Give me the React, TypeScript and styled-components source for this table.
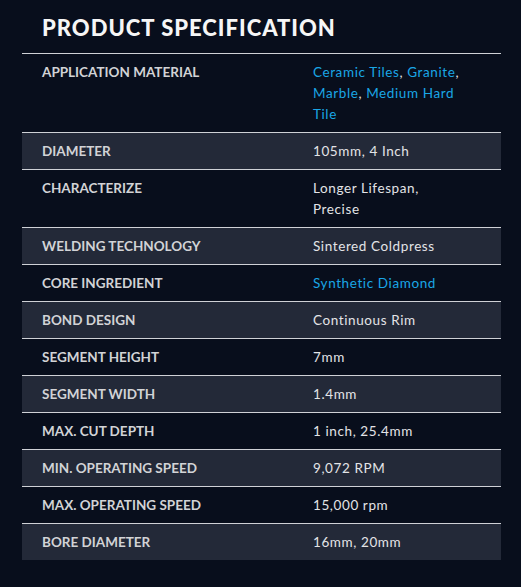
import React from "react";
import styled, { createGlobalStyle } from "styled-components";

const Global = createGlobalStyle`
  html, body { margin: 0; padding: 0; background: #080e1c; }
  body { font-family: "Lato", "DejaVu Sans", sans-serif; }
`;

const Page = styled.div`
  padding: 14px 20px 26px 22px;
  width: 479px;
`;

const Title = styled.h2`
  margin: 0 0 12px 20px;
  font-size: 22px;
  line-height: 27px;
  font-weight: 900;
  letter-spacing: 1px;
  color: #f6f6f6;
`;

const Table = styled.div`
  display: flex;
  flex-direction: column;
`;

const Row = styled.div<{ $shaded: boolean }>`
  display: grid;
  grid-template-columns: 291px 1fr;
  border-top: 1px solid #cfd1d6;
  background: ${(p) => (p.$shaded ? "#232938" : "transparent")};
  padding: 8px 0 7px;
`;

const Label = styled.div`
  padding-left: 20px;
  font-size: 13.5px;
  line-height: 21px;
  font-weight: 700;
  color: #d2d3d6;
  text-transform: uppercase;
`;

const Value = styled.div`
  padding-right: 38px;
  font-size: 13.5px;
  line-height: 21px;
  letter-spacing: 0.6px;
  color: #e3e4e7;
`;

const Link = styled.span`
  color: #1aa6e6;
`;

type Part = string | { link: string };

const rows: { label: string; value: Part[] }[] = [
  {
    label: "Application Material",
    value: [
      { link: "Ceramic Tiles" },
      ", ",
      { link: "Granite" },
      ", ",
      { link: "Marble" },
      ", ",
      { link: "Medium Hard Tile" },
    ],
  },
  { label: "Diameter", value: ["105mm, 4 Inch"] },
  { label: "Characterize", value: ["Longer Lifespan, Precise"] },
  { label: "Welding Technology", value: ["Sintered Coldpress"] },
  { label: "Core Ingredient", value: [{ link: "Synthetic Diamond" }] },
  { label: "Bond Design", value: ["Continuous Rim"] },
  { label: "Segment Height", value: ["7mm"] },
  { label: "Segment Width", value: ["1.4mm"] },
  { label: "Max. Cut Depth", value: ["1 inch, 25.4mm"] },
  { label: "Min. Operating Speed", value: ["9,072 RPM"] },
  { label: "Max. Operating Speed", value: ["15,000 rpm"] },
  { label: "Bore Diameter", value: ["16mm, 20mm"] },
];

export default function App() {
  return (
    <>
      <Global />
      <Page>
        <Title>PRODUCT SPECIFICATION</Title>
        <Table>
          {rows.map((r, i) => (
            <Row key={r.label} $shaded={i % 2 === 1}>
              <Label>{r.label}</Label>
              <Value>
                {r.value.map((p, j) =>
                  typeof p === "string" ? (
                    <React.Fragment key={j}>{p}</React.Fragment>
                  ) : (
                    <Link key={j}>{p.link}</Link>
                  )
                )}
              </Value>
            </Row>
          ))}
        </Table>
      </Page>
    </>
  );
}
